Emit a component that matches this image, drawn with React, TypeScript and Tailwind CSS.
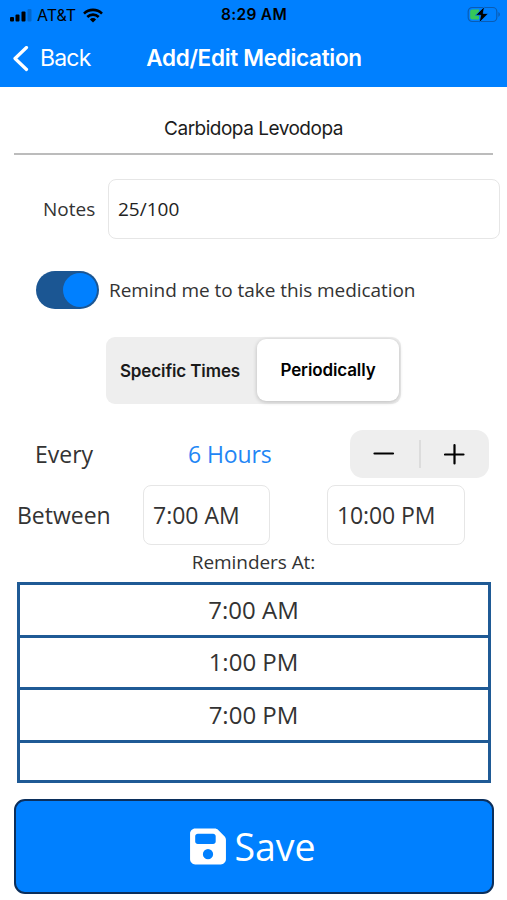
import { useState } from 'react';
import { FaFloppyDisk } from 'react-icons/fa6';

const REMINDERS = ['7:00 AM', '1:00 PM', '7:00 PM'];

function StatusBar() {
  return (
    <div className="flex h-[30px] items-center px-2.5 text-black">
      <div className="flex flex-1 items-center">
        <svg width="22" height="13" viewBox="0 0 22 13" fill="currentColor">
          <rect x="0" y="8" width="4" height="4.5" rx="1" />
          <rect x="5.5" y="5.5" width="4" height="7" rx="1" />
          <rect x="11.5" y="2.5" width="4" height="10" rx="1" />
          <rect x="17.5" y="0" width="4" height="12.5" rx="1" opacity="0.2" />
        </svg>
        <span className="ml-[5px] text-[16px]">AT&amp;T</span>
        <svg className="ml-[7px]" width="20" height="15" viewBox="0 0 20 15" fill="none" stroke="currentColor" strokeWidth="2.6">
          <path d="M1 5.6a12.8 12.8 0 0 1 18 0" />
          <path d="M4.3 9a8.1 8.1 0 0 1 11.4 0" />
          <path d="M10 14.6 6.9 11.4a4.4 4.4 0 0 1 6.2 0Z" fill="currentColor" stroke="none" />
        </svg>
      </div>
      <span className="pr-[3px] text-[15.5px] font-semibold tracking-[0.3px]">8:29 AM</span>
      <div className="-mr-1 flex flex-1 justify-end">
        <svg width="34" height="18" viewBox="0 0 34 18">
          <rect x="1.2" y="1.5" width="28.6" height="14" rx="4" fill="none" stroke="#0a5cb4" strokeWidth="1.2" />
          <path d="M5.2 3.5h6.800v10H5.200a2 2 0 0 1-2-2v-6a2 2 0 0 1 2-2Z" fill="#35c759" />
          <path d="M31.4 6.1c2 .9 2 3.9 0 4.8Z" fill="#0a5cb4" />
          <path d="M17.500 .5 8.500 9.300h5.200L12 17 21.400 7.400h-5.200Z" fill="#000" stroke="#0080ff" strokeWidth="0.8" />
        </svg>
      </div>
    </div>
  );
}

function NavBar() {
  return (
    <div className="flex h-[57px] items-center px-3 text-white">
      <button className="flex flex-1 items-center">
        <svg width="17" height="26" viewBox="0 0 17 26" fill="none" stroke="currentColor" strokeWidth="3.2" strokeLinecap="round" strokeLinejoin="round">
          <path d="M14.5 1.500 3 12.500 14.500 23.500" />
        </svg>
        <span className="ml-[11px] text-[23px] tracking-[-0.8px]">Back</span>
      </button>
      <h1 className="pb-px pl-px text-[22.5px] font-semibold tracking-[-0.3px]">Add/Edit Medication</h1>
      <div className="flex-1" />
    </div>
  );
}

export default function App() {
  const [hours, setHours] = useState(6);
  const [remind, setRemind] = useState(true);

  return (
    <div className="flex h-[900px] w-[507px] flex-col overflow-hidden bg-white font-['Open_Sans',sans-serif] text-[#333]">
      <header className="h-[87px] shrink-0 bg-[#0080ff] font-['Inter',sans-serif]">
        <StatusBar />
        <NavBar />
      </header>

      {/* Medication name */}
      <div className="mx-[14px] flex h-[68px] items-center justify-center border-b-2 border-[#bcbcbc] pt-[18px] font-['Inter',sans-serif] text-[19px] tracking-[-0.5px] text-[#1c1c1c]">
        Carbidopa Levodopa
      </div>

      {/* Notes */}
      <div className="mt-6 flex h-[60px] items-center pr-[7px]">
        <span className="w-[108px] pl-[43px] text-[19px]">Notes</span>
        <div className="flex h-full flex-1 items-center rounded-lg border-[1.5px] border-[#e6e6e6] pl-[9px] text-[19px] text-[#222]">25/100</div>
      </div>

      {/* Reminder switch */}
      <div className="mt-[31px] flex h-[40px] items-center pl-9">
        <button
          onClick={() => setRemind(!remind)}
          className={`flex h-[38px] w-[63px] items-center rounded-full bg-[#1b5693] px-0.5 ${remind ? 'justify-end' : 'justify-start'}`}
        >
          <span className="size-[34px] rounded-full bg-[#0080ff]" />
        </button>
        <span className="ml-[10px] text-[19px] tracking-[-0.06px]">Remind me to take this medication</span>
      </div>

      {/* Schedule type */}
      <div className="ml-[106px] mt-[27px] flex h-[67px] w-[295px] rounded-[9px] bg-[#eee] p-0.5 font-['Inter',sans-serif] text-[17px] font-semibold tracking-[-0.12px] text-[#1a1a1a]">
        <button className="w-[149px] pr-[5px] pt-0.5">Specific Times</button>
        <button className="h-[62px] flex-1 rounded-[9px] bg-white pt-[2px] text-black shadow-[0_1px_4px_rgba(0,0,0,0.22)]">Periodically</button>
      </div>

      {/* Interval */}
      <div className="mt-[26px] flex h-[48px] items-center text-[23px]">
        <span className="w-[188px] pl-[35px]">Every</span>
        <span className="w-[162px] tracking-[-0.1px] text-[#1f86f5]">{hours} Hours</span>
        <div className="flex h-full w-[139px] items-center rounded-[13px] bg-[#eee] text-black">
          <button className="flex flex-1 justify-center" onClick={() => setHours(Math.max(1, hours - 1))}>
            <svg width="22" height="22" viewBox="0 0 22 22" stroke="currentColor" strokeWidth="2.2" strokeLinecap="round">
              <path d="M1.5 10.5h18.500" />
            </svg>
          </button>
          <span className="h-7 w-0.5 bg-[#dcdcdc]" />
          <button className="flex flex-1 justify-center" onClick={() => setHours(hours + 1)}>
            <svg width="22" height="22" viewBox="0 0 22 22" stroke="currentColor" strokeWidth="2.2" strokeLinecap="round">
              <path d="M1 11.5h18.500M10.500 2v18.500" />
            </svg>
          </button>
        </div>
      </div>

      {/* Time window */}
      <div className="mt-[7px] flex h-[60px] items-center text-[23px]">
        <span className="w-[143px] pl-[17px]">Between</span>
        <div className="flex h-full w-[127px] items-center rounded-lg border-[1.5px] border-[#e6e6e6] pl-[9px]">7:00 AM</div>
        <div className="ml-[57px] flex h-full w-[138px] items-center rounded-lg border-[1.5px] border-[#e6e6e6] pl-[9px] tracking-[-0.1px]">10:00 PM</div>
      </div>

      {/* Reminder list */}
      <div className="flex h-[37px] items-center justify-center pb-[3px] text-[19px] tracking-[-0.06px]">Reminders At:</div>
      <div className="ml-[17px] mr-4 flex h-[201px] flex-col border-[3px] border-[#1f5a95] text-[24px]">
        {REMINDERS.map((time, i) => (
          <div key={i} className="flex h-[52.67px] shrink-0 items-center justify-center border-b-[3px] border-[#1f5a95] pr-px">
            {time}
          </div>
        ))}
      </div>

      <button className="ml-[14px] mr-[13px] mt-4 flex h-[95px] items-center justify-center gap-2 rounded-[11px] border-2 border-[#0b2f5c] bg-[#0080ff] pr-0.5 text-[37.5px] text-white">
        <FaFloppyDisk className="h-[41px] w-[36px]" />
        <span className="pt-px">Save</span>
      </button>
    </div>
  );
}
